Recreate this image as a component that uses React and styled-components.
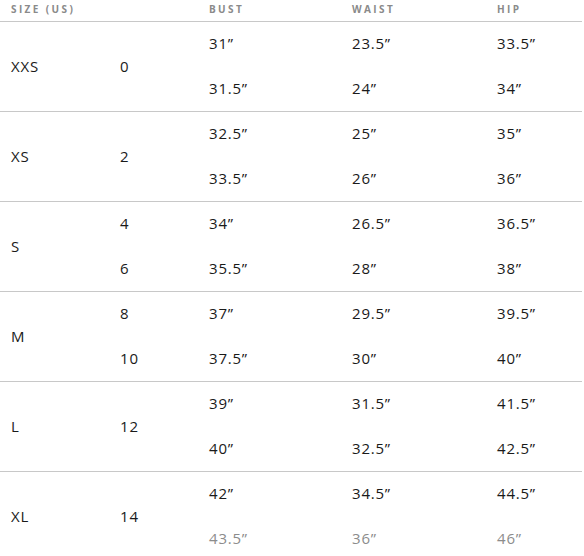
import styled, { createGlobalStyle } from "styled-components";

const GlobalStyle = createGlobalStyle`
  html, body {
    margin: 0;
    padding: 0;
    background: #fff;
  }
  body {
    font-family: "Open Sans", "Liberation Sans", sans-serif;
  }
`;

const sizes = [
    { label: "XXS", us: ["0"], bust: ["31”", "31.5”"], waist: ["23.5”", "24”"], hip: ["33.5”", "34”"] },
    { label: "XS", us: ["2"], bust: ["32.5”", "33.5”"], waist: ["25”", "26”"], hip: ["35”", "36”"] },
    { label: "S", us: ["4", "6"], bust: ["34”", "35.5”"], waist: ["26.5”", "28”"], hip: ["36.5”", "38”"] },
    { label: "M", us: ["8", "10"], bust: ["37”", "37.5”"], waist: ["29.5”", "30”"], hip: ["39.5”", "40”"] },
    { label: "L", us: ["12"], bust: ["39”", "40”"], waist: ["31.5”", "32.5”"], hip: ["41.5”", "42.5”"] },
    { label: "XL", us: ["14"], bust: ["42”", "43.5”"], waist: ["34.5”", "36”"], hip: ["44.5”", "46”"], fadeLast: true },
];

const App = () => {
    return (
        <>
            <GlobalStyle />
            <Table>
                <colgroup>
                    <col style={{ width: 109 }} />
                    <col style={{ width: 89 }} />
                    <col style={{ width: 143 }} />
                    <col style={{ width: 145 }} />
                    <col style={{ width: 96 }} />
                </colgroup>
                <thead>
                    <HeadRow>
                        <Th>Size (US)</Th>
                        <Th />
                        <Th>Bust</Th>
                        <Th>Waist</Th>
                        <Th>Hip</Th>
                    </HeadRow>
                </thead>
                <tbody>
                    {sizes.map((s) => (
                        [0, 1].map((i) => (
                            <Row key={s.label + i} $last={i === 1} $faded={s.fadeLast && i === 1}>
                                {i === 0 && <Td rowSpan={2}>{s.label}</Td>}
                                {s.us.length === 2
                                    ? <Td>{s.us[i]}</Td>
                                    : i === 0 && <Td rowSpan={2}>{s.us[0]}</Td>}
                                <Td>{s.bust[i]}</Td>
                                <Td>{s.waist[i]}</Td>
                                <Td>{s.hip[i]}</Td>
                            </Row>
                        ))
                    ))}
                </tbody>
            </Table>
        </>
    );
};

export default App;

const Table = styled.table`
width: 582px;
border-collapse: collapse;
table-layout: fixed;
color: #1e1e1e;
`;

const HeadRow = styled.tr`
height: 21px;
border-bottom: 1px solid #c8c8c8;
`;

const Th = styled.th`
padding: 0 0 2px 11px;
text-align: left;
vertical-align: middle;
font-size: 10px;
font-weight: 700;
letter-spacing: 2.4px;
text-transform: uppercase;
color: #8a8a8a;
line-height: 16px;
`;

const Row = styled.tr`
height: 45px;
${props => props.$last && `
    border-bottom: 1px solid #c8c8c8;
`}
${props => props.$faded && `
    td { color: #8c8c8c; }
`}
`;

const Td = styled.td`
padding: 0 0 1px 11px;
font-size: 15px;
letter-spacing: 0.8px;
line-height: 20px;
vertical-align: middle;
color: #1a1a1a;
`;
